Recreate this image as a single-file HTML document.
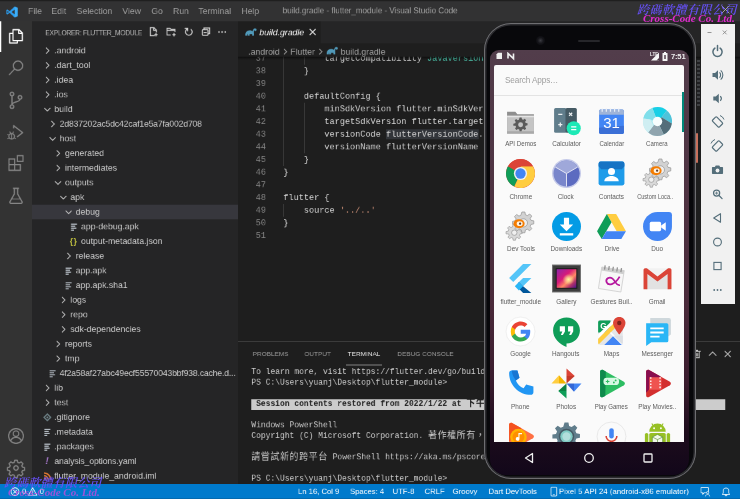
<!DOCTYPE html>
<html><head><meta charset="utf-8"><title>build.gradle - flutter_module - Visual Studio Code</title>
<style>
html,body{margin:0;padding:0;background:#1e1e1e;overflow:hidden}
body{width:740px;height:499px;position:relative;font-family:"Liberation Sans","Noto Sans CJK TC",sans-serif}
#vs{will-change:transform;position:absolute;left:0;top:0;width:1110px;height:749px;transform:scale(0.666667);transform-origin:0 0;background:#1e1e1e;color:#ccc;font-size:13px;overflow:hidden}
#vs div,#vs span{box-sizing:border-box}
.abs{position:absolute}
#title{left:0;top:0;width:1110px;height:31.500px;z-index:5;background:#323233;border-top:2px solid #1f1f1f}
#title .m{position:absolute;top:-.3px;height:29px;line-height:29px;color:#9d9d9d;font-size:13px;white-space:nowrap}
#act{left:0;top:30px;width:48px;height:696px;background:#333333}
#side{left:48px;top:30px;width:309px;height:696px;background:#252526}
#side .hd{position:absolute;left:20px;top:1.500px;height:35px;line-height:35px;font-size:10px;letter-spacing:-.34px;color:#bbbbbb;white-space:nowrap}
.row{position:absolute;left:48px;width:309px;height:22px;line-height:22px;white-space:nowrap;color:#cccccc;font-size:13px;overflow:hidden}
.row.sel{background:#37373d}
.row .tw{display:inline-block;width:16px;height:16px;vertical-align:-4px;margin-right:3px}
.row .ic{text-align:center;line-height:16px;vertical-align:0;height:16px}
.lbl{position:relative;top:-.4px}
#tabs{left:357px;top:30px;width:753px;height:35px;background:#252526}
#tab{left:357px;top:30px;width:124px;height:35px;background:#1e1e1e}
#bc{left:357px;top:65px;width:753px;height:19.500px;background:#1e1e1e;z-index:3}
#bcsh{left:357px;top:84.500px;width:753px;height:5px;z-index:3;background:linear-gradient(rgba(0,0,0,.55),rgba(0,0,0,0))}
#bc span{position:absolute;top:2px;line-height:22px;color:#a0a0a0;font-size:13px;white-space:nowrap}
#ed{left:357px;top:65px;width:753px;height:446px;overflow:hidden;font-family:"Liberation Mono",monospace;font-size:12.83px}
.ln{position:absolute;left:357px;width:42px;height:19px;line-height:19px;text-align:right;color:#858585;font-family:"Liberation Mono",monospace;font-size:12.83px}
.cl{position:absolute;left:425px;height:19px;line-height:19px;white-space:pre;color:#d4d4d4;font-family:"Liberation Mono",monospace;font-size:12.83px}
.cj{font-size:13.400px;letter-spacing:.95px}.ty{color:#4ec9b0}.st{color:#ce9178}.hl{background:#32353a}
.guide{position:absolute;width:1px;background:#404040}
#panel{left:357px;top:511.500px;width:753px;height:215px;background:#1e1e1e;border-top:1px solid #454545}
.pt{position:absolute;top:513.700px;height:35px;line-height:34px;font-size:9.700px;color:#999999;white-space:nowrap}
.tl{position:absolute;left:377px;height:16px;line-height:16px;white-space:pre;color:#cccccc;font-family:"Liberation Mono","Noto Sans CJK TC",monospace;font-size:11.95px}
#status{left:0;top:726px;width:1110px;height:23px;background:#007acc}
#status span{position:absolute;top:0;line-height:22px;color:#fff;font-size:11.500px;white-space:nowrap}

#phone{will-change:transform;position:absolute;left:0;top:0;width:740px;height:499px}
#pbody{position:absolute;left:484px;top:22.500px;width:211.500px;height:456.500px;border-radius:27px;background:#08080b;box-shadow:inset 0 0 0 1px #6e6e71,inset 0 0 0 2.500px #2c2c30}
#pscreen{position:absolute;left:490px;top:49.500px;width:198.800px;height:425px;border-radius:9px 9px 16px 16px;background:linear-gradient(#523d4b 0,#4f3443 30%,#4a2a3a 60%,#3a1c2e 78%,#1d0c1c 90%,#12071a 100%)}
#pcard{position:absolute;left:494px;top:64.700px;width:190.400px;height:377px;background:#fafafa;border-radius:2px 2px 0 0;overflow:hidden}
#psearch{position:absolute;left:11px;top:10.300px;font-size:8.200px;line-height:12px;color:#9e9e9e;letter-spacing:-.12px}
#pdiv{position:absolute;left:0;top:30px;width:191px;height:1px;background:#e3e3e3}
#pscroll{position:absolute;left:187.900px;top:27.500px;width:2.500px;height:39.500px;background:#00897b}
.ai{position:absolute}
.al{position:absolute;width:60px;text-align:center;font-size:7.800px;line-height:10px;color:#5c5c5c;white-space:nowrap}
.al span{display:inline-block;transform:scaleX(.82);transform-origin:50% 50%}
#tb{position:absolute;left:701px;top:23.500px;width:34px;height:280px;background:#f1f1f1}
.wm{will-change:transform;font-family:'Liberation Serif','Noto Serif CJK SC',serif;font-style:italic;font-weight:bold;white-space:nowrap}
</style></head><body>
<div id="vs">
<div id="title" class="abs">
<svg class="abs" style="left:9px;top:6.500px" width="18" height="18" viewBox="0 0 100 100"><path d="M72 4L30 43 12 29 3 33.500v33L12 71l18-14 42 39 25-11V15zM12 60V40l11 10zm60 9L47 50l25-19z" fill="#2c9ef0"/><path d="M72 4l25 11v70L72 96z" fill="#3daef8"/></svg>
<span class="m" style="left:42px">File</span><span class="m" style="left:77px">Edit</span><span class="m" style="left:115px">Selection</span><span class="m" style="left:183.500px">View</span><span class="m" style="left:227px">Go</span><span class="m" style="left:259.500px">Run</span><span class="m" style="left:297.500px">Terminal</span><span class="m" style="left:362px">Help</span>
<span class="m" style="left:424px;font-size:12.050px;color:#a2a2a2">build.gradle - flutter_module - Visual Studio Code</span>
</div>
<div id="act" class="abs"></div>
<div class="abs" style="left:0;top:30px;width:2px;height:48px;background:#fff"></div>
<svg class="abs" style="left:0;top:30px" width="48" height="696" viewBox="0 0 48 696">
<g fill="none" stroke="#ffffff" stroke-width="1.800" stroke-linejoin="round">
<path d="M19.500 14.500h9l5 5v11.500h-14z"/><path d="M28 14.500v5.500h5.500"/><path d="M19.500 20h-5v14.500h11.500v-3.500"/>
</g>
<g fill="none" stroke="#858585" stroke-width="1.800">
<circle cx="27" cy="68.500" r="7"/><path d="M22 73.500l-8.500 9"/>
<circle cx="18" cy="111" r="2.700"/><circle cx="18" cy="130" r="2.700"/><circle cx="30" cy="116" r="2.700"/><path d="M18 113.700v13.600M30 118.700c0 5-12 3.500-12 8.600"/>
<g transform="translate(0 3)"><path d="M20.500 159.500v-4l13.500 10.500-8.500 6.500" stroke-linejoin="round"/><circle cx="17.500" cy="171.500" r="4.200"/><path d="M17.500 167v9M11 168.500l2.500 1M11 175l2.500-1M24 175l-2.500-1M14.500 164.500l1.500 2M20.500 164.500l-1.500 2" stroke-width="1.300"/></g>
<g transform="translate(0 2)"><path d="M13.500 206.500h8.500v8.500h8.500v8.500h-17zM22 215v8.500M13.500 215h8.500"/><rect x="26" y="201.500" width="8.500" height="8.500"/></g>
<path d="M19.500 252.500h9M21.500 252.500v8.500l-6.500 11.500c-.6 1.200 0 2.500 1.500 2.500h15c1.500 0 2.100-1.300 1.500-2.500l-6.500-11.500v-8.500" stroke-linejoin="round"/><path d="M17.500 268.500h13" stroke-width="1.300"/>
<circle cx="24" cy="624" r="11"/><circle cx="24" cy="620.500" r="4.200"/><path d="M16 631.500c1.500-4.500 5-5.500 8-5.500s6.500 1 8 5.500"/>
</g>
<g transform="translate(24 672)" fill="none" stroke="#858585" stroke-width="1.800" stroke-linejoin="round">
<path d="M-2-11.500h4l.7 3.200 2.200.9 2.800-1.800 2.800 2.800-1.800 2.800.9 2.200 3.200.7v4l-3.200.7-.9 2.200 1.800 2.800-2.800 2.800-2.800-1.800-2.200.9-.7 3.200h-4l-.7-3.200-2.200-.9-2.800 1.800-2.800-2.800 1.800-2.800-.9-2.200-3.200-.7v-4l3.200-.7.9-2.200-1.800-2.800 2.800-2.800 2.800 1.800 2.200-.9z"/><circle cx="0" cy="0" r="3.300"/>
</g>
</svg>

<div id="side" class="abs"><span class="hd">EXPLORER: FLUTTER_MODULE</span></div>
<svg class="abs" style="left:220px;top:38px" width="125" height="20" viewBox="0 0 125 20">
<g fill="none" stroke="#d0d0d0" stroke-width="1.500">
<path d="M12 15.500H5.500v-12h5.500l3.500 3.500v3.500M10.500 3.500v4h4M14 11.500v5M11.500 14h5"/>
<path d="M36 14.500h-5.500v-10h4.500l1.500 1.500h6v4M30.500 7.500h12M41 11.500v5M38.500 14h5"/>
<path d="M66.500 6a5 5 0 1 1-5.300-.7M57.500 4.500h4v4" stroke-linecap="round"/>
<rect x="83.500" y="6.500" width="8.500" height="8.500" rx="1"/><path d="M86 6.500v-2.500h8.500v8.500h-2.500M85.500 10.700h4.500"/>
</g>
<g fill="#c5c5c5"><circle cx="108.500" cy="10" r="1.250"/><circle cx="113.200" cy="10" r="1.250"/><circle cx="117.900" cy="10" r="1.250"/></g>
</svg>

<div class="row" style="top:65px;padding-left:14.5px"><svg class="tw" viewBox="0 0 16 16"><path d="M6 3.5l4.5 4.5L6 12.5" fill="none" stroke="#c5c5c5" stroke-width="1.3"/></svg><span class="lbl">.android</span></div>
<div class="row" style="top:87px;padding-left:14.5px"><svg class="tw" viewBox="0 0 16 16"><path d="M6 3.5l4.5 4.5L6 12.5" fill="none" stroke="#c5c5c5" stroke-width="1.3"/></svg><span class="lbl">.dart_tool</span></div>
<div class="row" style="top:109px;padding-left:14.5px"><svg class="tw" viewBox="0 0 16 16"><path d="M6 3.5l4.5 4.5L6 12.5" fill="none" stroke="#c5c5c5" stroke-width="1.3"/></svg><span class="lbl">.idea</span></div>
<div class="row" style="top:131px;padding-left:14.5px"><svg class="tw" viewBox="0 0 16 16"><path d="M6 3.5l4.5 4.5L6 12.5" fill="none" stroke="#c5c5c5" stroke-width="1.3"/></svg><span class="lbl">.ios</span></div>
<div class="row" style="top:153px;padding-left:14.5px"><svg class="tw" viewBox="0 0 16 16"><path d="M3.5 6l4.5 4.5L12.500 6" fill="none" stroke="#c5c5c5" stroke-width="1.3"/></svg><span class="lbl">build</span></div>
<div class="row" style="top:175px;padding-left:22.5px"><svg class="tw" viewBox="0 0 16 16"><path d="M6 3.5l4.5 4.5L6 12.5" fill="none" stroke="#c5c5c5" stroke-width="1.3"/></svg><span class="lbl" style="letter-spacing:-.27px">2d837202ac5dc42caf1e5a7fa002d708</span></div>
<div class="row" style="top:197px;padding-left:22.5px"><svg class="tw" viewBox="0 0 16 16"><path d="M3.5 6l4.5 4.5L12.500 6" fill="none" stroke="#c5c5c5" stroke-width="1.3"/></svg><span class="lbl">host</span></div>
<div class="row" style="top:219px;padding-left:30.5px"><svg class="tw" viewBox="0 0 16 16"><path d="M6 3.5l4.5 4.5L6 12.5" fill="none" stroke="#c5c5c5" stroke-width="1.3"/></svg><span class="lbl">generated</span></div>
<div class="row" style="top:241px;padding-left:30.5px"><svg class="tw" viewBox="0 0 16 16"><path d="M6 3.5l4.5 4.5L6 12.5" fill="none" stroke="#c5c5c5" stroke-width="1.3"/></svg><span class="lbl">intermediates</span></div>
<div class="row" style="top:263px;padding-left:30.5px"><svg class="tw" viewBox="0 0 16 16"><path d="M3.5 6l4.5 4.5L12.500 6" fill="none" stroke="#c5c5c5" stroke-width="1.3"/></svg><span class="lbl">outputs</span></div>
<div class="row" style="top:285px;padding-left:38.5px"><svg class="tw" viewBox="0 0 16 16"><path d="M3.5 6l4.5 4.5L12.500 6" fill="none" stroke="#c5c5c5" stroke-width="1.3"/></svg><span class="lbl">apk</span></div>
<div class="row sel" style="top:307px;padding-left:46.5px"><svg class="tw" viewBox="0 0 16 16"><path d="M3.5 6l4.5 4.5L12.500 6" fill="none" stroke="#c5c5c5" stroke-width="1.3"/></svg><span class="lbl">debug</span></div>
<div class="row" style="top:329px;padding-left:54.5px"><svg class="tw" viewBox="0 0 16 16"><path d="M3.500 4.250h9M3.500 7.250h6.500M3.500 10.250h8M3.500 13.250h4.500" fill="none" stroke="#c3ccd4" stroke-width="1.500"/></svg><span class="lbl">app-debug.apk</span></div>
<div class="row" style="top:351px;padding-left:54.5px"><span class="tw ic" style="color:#cbcb41;font-weight:bold;font-size:12px;letter-spacing:1px">{}</span><span class="lbl">output-metadata.json</span></div>
<div class="row" style="top:373px;padding-left:46.5px"><svg class="tw" viewBox="0 0 16 16"><path d="M6 3.5l4.5 4.5L6 12.5" fill="none" stroke="#c5c5c5" stroke-width="1.3"/></svg><span class="lbl">release</span></div>
<div class="row" style="top:395px;padding-left:46.5px"><svg class="tw" viewBox="0 0 16 16"><path d="M3.500 4.250h9M3.500 7.250h6.500M3.500 10.250h8M3.500 13.250h4.500" fill="none" stroke="#c3ccd4" stroke-width="1.500"/></svg><span class="lbl">app.apk</span></div>
<div class="row" style="top:417px;padding-left:46.5px"><svg class="tw" viewBox="0 0 16 16"><path d="M3.500 4.250h9M3.500 7.250h6.500M3.500 10.250h8M3.500 13.250h4.500" fill="none" stroke="#c3ccd4" stroke-width="1.500"/></svg><span class="lbl">app.apk.sha1</span></div>
<div class="row" style="top:439px;padding-left:38.5px"><svg class="tw" viewBox="0 0 16 16"><path d="M6 3.5l4.5 4.5L6 12.5" fill="none" stroke="#c5c5c5" stroke-width="1.3"/></svg><span class="lbl">logs</span></div>
<div class="row" style="top:461px;padding-left:38.5px"><svg class="tw" viewBox="0 0 16 16"><path d="M6 3.5l4.5 4.5L6 12.5" fill="none" stroke="#c5c5c5" stroke-width="1.3"/></svg><span class="lbl">repo</span></div>
<div class="row" style="top:483px;padding-left:38.5px"><svg class="tw" viewBox="0 0 16 16"><path d="M6 3.5l4.5 4.5L6 12.5" fill="none" stroke="#c5c5c5" stroke-width="1.3"/></svg><span class="lbl">sdk-dependencies</span></div>
<div class="row" style="top:505px;padding-left:30.5px"><svg class="tw" viewBox="0 0 16 16"><path d="M6 3.5l4.5 4.5L6 12.5" fill="none" stroke="#c5c5c5" stroke-width="1.3"/></svg><span class="lbl">reports</span></div>
<div class="row" style="top:527px;padding-left:30.5px"><svg class="tw" viewBox="0 0 16 16"><path d="M6 3.5l4.5 4.5L6 12.5" fill="none" stroke="#c5c5c5" stroke-width="1.3"/></svg><span class="lbl">tmp</span></div>
<div class="row" style="top:549px;padding-left:22.5px"><svg class="tw" viewBox="0 0 16 16"><path d="M3.500 4.250h9M3.500 7.250h6.500M3.500 10.250h8M3.500 13.250h4.500" fill="none" stroke="#c3ccd4" stroke-width="1.500"/></svg><span class="lbl" style="letter-spacing:-.27px">4f2a58af27abc49ecf55570043bbf938.cache.d...</span></div>
<div class="row" style="top:571px;padding-left:14.5px"><svg class="tw" viewBox="0 0 16 16"><path d="M6 3.5l4.5 4.5L6 12.5" fill="none" stroke="#c5c5c5" stroke-width="1.3"/></svg><span class="lbl">lib</span></div>
<div class="row" style="top:593px;padding-left:14.5px"><svg class="tw" viewBox="0 0 16 16"><path d="M6 3.5l4.5 4.5L6 12.5" fill="none" stroke="#c5c5c5" stroke-width="1.3"/></svg><span class="lbl">test</span></div>
<div class="row" style="top:615px;padding-left:14.5px"><svg class="tw" viewBox="0 0 16 16"><path d="M8 3l5 5-5 5-5-5z" fill="none" stroke="#6d8086" stroke-width="1.800"/><circle cx="8" cy="8" r="1.500" fill="#6d8086"/></svg><span class="lbl">.gitignore</span></div>
<div class="row" style="top:637px;padding-left:14.5px"><svg class="tw" viewBox="0 0 16 16"><path d="M3.500 4.250h9M3.500 7.250h6.500M3.500 10.250h8M3.500 13.250h4.500" fill="none" stroke="#c3ccd4" stroke-width="1.500"/></svg><span class="lbl">.metadata</span></div>
<div class="row" style="top:659px;padding-left:14.5px"><svg class="tw" viewBox="0 0 16 16"><path d="M3.500 4.250h9M3.500 7.250h6.500M3.500 10.250h8M3.500 13.250h4.500" fill="none" stroke="#c3ccd4" stroke-width="1.500"/></svg><span class="lbl">.packages</span></div>
<div class="row" style="top:681px;padding-left:14.5px"><span class="tw ic" style="color:#a074c4;font-weight:bold;font-size:15px;font-style:italic">!</span><span class="lbl" style="letter-spacing:-.2px">analysis_options.yaml</span></div>
<div class="row" style="top:703px;padding-left:14.5px"><svg class="tw" viewBox="0 0 16 16"><circle cx="4.500" cy="12" r="1.800" fill="#e37933"/><path d="M3 7.500a6 6 0 0 1 6 6M3 3.500a10 10 0 0 1 10 10" fill="none" stroke="#e37933" stroke-width="2"/></svg><span class="lbl">flutter_module_android.iml</span></div>

<div id="tabs" class="abs"></div>
<div id="tab" class="abs"></div>
<span class="abs" style="left:389px;top:31px;line-height:35px;font-size:13px;font-style:italic;color:#fff;white-space:nowrap">build.gradle</span>
<svg class="abs" style="left:461px;top:40px" width="16" height="16" viewBox="0 0 16 16"><path d="M3.500 3.500l9 9M12.500 3.500l-9 9" stroke="#e8e8e8" stroke-width="1.600" fill="none"/></svg>
<div class="ln" style="top:77.6px">37</div><div class="cl" style="top:77.6px">        <span class="dim">targetCompatibility</span> <span class="ty">JavaVersion</span>.VERSION_1_8</div>
<div class="ln" style="top:96.6px">38</div><div class="cl" style="top:96.6px">    }</div>
<div class="ln" style="top:115.6px">39</div><div class="cl" style="top:115.6px"></div>
<div class="ln" style="top:134.6px">40</div><div class="cl" style="top:134.6px">    defaultConfig {</div>
<div class="ln" style="top:153.6px">41</div><div class="cl" style="top:153.6px">        minSdkVersion flutter.minSdkVersion</div>
<div class="ln" style="top:172.6px">42</div><div class="cl" style="top:172.6px">        targetSdkVersion flutter.targetSdkVersion</div>
<div class="ln" style="top:191.6px">43</div><div class="cl" style="top:191.6px">        versionCode <span class="hl">flutterVersionCode</span>.toInteger()</div>
<div class="ln" style="top:210.6px">44</div><div class="cl" style="top:210.6px">        versionName flutterVersionName</div>
<div class="ln" style="top:229.6px">45</div><div class="cl" style="top:229.6px">    }</div>
<div class="ln" style="top:248.6px">46</div><div class="cl" style="top:248.6px">}</div>
<div class="ln" style="top:267.6px">47</div><div class="cl" style="top:267.6px"></div>
<div class="ln" style="top:286.6px">48</div><div class="cl" style="top:286.6px">flutter {</div>
<div class="ln" style="top:305.6px">49</div><div class="cl" style="top:305.6px">    source <span class="st">'../..'</span></div>
<div class="ln" style="top:324.6px">50</div><div class="cl" style="top:324.6px">}</div>
<div class="ln" style="top:343.6px">51</div><div class="cl" style="top:343.6px"></div>

<div class="guide" style="left:425px;top:78px;height:171px"></div>
<div class="guide" style="left:456px;top:78px;height:19px"></div>
<div class="guide" style="left:456px;top:154px;height:76px"></div>
<div class="guide" style="left:425px;top:306px;height:19px"></div>
<div id="bcsh" class="abs"></div><div id="bc" class="abs"><span style="left:15.500px">.android</span><span style="left:78.500px">Flutter</span><span style="left:154px">build.gradle</span>
<svg class="abs" style="left:0;top:0" width="200" height="22" viewBox="0 0 200 22"><path d="M69 8.500l4 4-4 4M122 8.500l4 4-4 4" fill="none" stroke="#a0a0a0" stroke-width="1.200"/></svg></div>
<svg class="abs" style="left:366px;top:39px;z-index:4" width="20" height="18" viewBox="0 0 20 18"><path d="M2 13.500c0-4 2.500-7 6.500-7 2 0 3.500.5 4.500 1.500.3-2.300 1.500-4 3-4.500 1.500-.4 2.800.6 2.800 2 0 1.300-1 2.200-2.100 2-.6-.1-1-.6-.9-1.300-.8.600-1.100 2-1 3.600.1 1.500.2 3.200.2 4.700h-2.800v-2.500c-1 .4-2.500.4-3.700 0v2.500H5.700v-3c-.5.500-.7 1.200-.7 2.200v.8H2z" fill="#519aba"/></svg>
<svg class="abs" style="left:488px;top:67px;z-index:4" width="20" height="18" viewBox="0 0 20 18"><path d="M2 13.500c0-4 2.500-7 6.500-7 2 0 3.500.5 4.500 1.500.3-2.300 1.500-4 3-4.500 1.500-.4 2.800.6 2.800 2 0 1.300-1 2.200-2.100 2-.6-.1-1-.6-.9-1.300-.8.600-1.100 2-1 3.600.1 1.500.2 3.200.2 4.700h-2.800v-2.500c-1 .4-2.500.4-3.700 0v2.500H5.700v-3c-.5.500-.7 1.200-.7 2.200v.8H2z" fill="#519aba"/></svg>

<div id="panel" class="abs"></div>
<span class="pt" style="left:379px">PROBLEMS</span><span class="pt" style="left:456.500px">OUTPUT</span><span class="pt" style="left:519px;padding:0 2.500px;color:#e7e7e7;border-bottom:1px solid #e7e7e7;height:34.300px">TERMINAL</span><span class="pt" style="left:596px">DEBUG CONSOLE</span>
<svg class="abs" style="left:1036px;top:521px" width="70" height="20" viewBox="0 0 70 20"><g fill="none" stroke="#c5c5c5" stroke-width="1.300"><path d="M4 6h11M6 6v9.500h7V6M8 4.500h3M8.300 8.500v5M10.700 8.500v5"/><path d="M27.500 12.500l5.500-5.500 5.500 5.500"/><path d="M51 5.500l9 9M60 5.500l-9 9"/></g></svg>
<div class="tl" style="top:550px">To learn more, visit https://flutter.dev/go/build-aar</div>
<div class="tl" style="top:566px">PS C:\Users\yuanj\Desktop\flutter_module&gt;</div>
<div class="abs" style="left:377px;top:599px;width:711px;height:16px;background:#cccccc"></div>
<div class="tl" style="top:598px;color:#1e1e1e;font-weight:bold"> Session contents restored from 2022/1/22 at <span class="cj">下午</span> 03:41:15 </div>
<div class="tl" style="top:630px">Windows PowerShell</div>
<div class="tl" style="top:646px">Copyright (C) Microsoft Corporation. <span class="cj">著作權所有，並保留一切權利。</span></div>
<div class="tl" style="top:678px"><span class="cj">請嘗試新的跨平台</span> PowerShell https://aka.ms/pscore6</div>
<div class="tl" style="top:710px">PS C:\Users\yuanj\Desktop\flutter_module&gt;</div>

<div id="status" class="abs">
<span style="left:33px">0</span><span style="left:59.500px">0</span>
<span style="left:447px">Ln 16, Col 9</span><span style="left:525px">Spaces: 4</span><span style="left:589px">UTF-8</span><span style="left:637px">CRLF</span><span style="left:679px">Groovy</span><span style="left:733px">Dart DevTools</span><span style="left:838.500px;letter-spacing:.1px">Pixel 5 API 24 (android-x86 emulator)</span>
</div>
<svg class="abs" style="left:0;top:726px" width="1110" height="22" viewBox="0 0 1110 22">
<g fill="none" stroke="#ffffff" stroke-width="1.200">
<circle cx="22.500" cy="11.500" r="5.800"/><path d="M19.800 8.800l5.400 5.400M25.200 8.800l-5.400 5.400"/>
<path d="M49 5.500l6.300 11.500H42.700z" stroke-linejoin="round"/><path d="M49 9.500v4M49 14.500v1.300"/>
<rect x="826.500" y="5" width="8.500" height="13" rx="1.200"/><path d="M829.500 15.800h2.500" stroke-width="1"/>
<path d="M1051.500 5.500h11v7.500h-6l-2.500 2.500v-2.500h-2.500z" stroke-linejoin="round" stroke-width="1.100"/><circle cx="1061.500" cy="13" r="1.700" fill="#007acc" stroke-width="1"/><path d="M1058.300 18.500c.3-2 1.600-3 3.200-3s2.900 1 3.200 3" stroke-width="1"/>
<path d="M1083.500 15.500h11l-1.500-2v-3.500a4 4 0 0 0-8 0v3.500zM1087.700 16v.5a1.300 1.300 0 0 0 2.600 0V16" stroke-linejoin="round" stroke-width="1.100"/>
</g>
</svg>

<div class="abs" style="left:0;top:747.500px;width:1110px;height:2px;background:#123a58"></div>
</div>
<div id="phone">
<div id="pbody"></div><div id="pscreen"></div><div id="pcard"><div id="psearch">Search Apps…</div><div id="pdiv"></div><div id="pscroll"></div>
<svg class="ai" style="left:11.2px;top:41.2px" width="31.0" height="31.0" viewBox="0 0 30 30"><path d="M2 5.500h8l2 2.500h16v18.500H2z" fill="#8f8f8f"/><path d="M2 9.500h26v17H2z" fill="#c4c4c4"/><path d="M2 9.500h26v1.500H2z" fill="#e4e4e4"/><path d="M2 24.500h26v2H2z" fill="#a9a9a9"/><g transform="translate(7 10) scale(.54)" fill="#5a5a5a"><path d="M13.200 2h3.600l.6 3.300 2.300 1 2.800-1.900 2.500 2.500-1.900 2.800 1 2.300 3.300.6v3.600l-3.300.6-1 2.300 1.900 2.800-2.500 2.500-2.800-1.900-2.300 1-.6 3.300h-3.600l-.6-3.300-2.300-1-2.800 1.900-2.500-2.500 1.900-2.800-1-2.300L2 16.800v-3.600l3.300-.6 1-2.300-1.900-2.800 2.500-2.500 2.800 1.900 2.300-1z"/></g><circle cx="15.100" cy="18.100" r="2.400" fill="#c4c4c4"/></svg>
<div class="al" style="left:-3.3px;top:74.5px"><span style="transform:scaleX(0.79)">API Demos</span></div>
<svg class="ai" style="left:56.7px;top:41.2px" width="31.0" height="31.0" viewBox="0 0 30 30"><rect x="3" y="2" width="12" height="24" rx="1.500" fill="#607d8b"/><rect x="14" y="2" width="11" height="24" rx="1.500" fill="#455a64"/><path d="M7 8h4M7 18h4M9 16v4M17.500 6.500l3 3M20.500 6.500l-3 3" stroke="#eceff1" stroke-width="1.200" fill="none"/><circle cx="22" cy="21.500" r="6.800" fill="#1de9b6"/><path d="M19.500 20.300h5M19.500 22.800h5" stroke="#fff" stroke-width="1.200"/></svg>
<div class="al" style="left:42.2px;top:74.5px"><span>Calculator</span></div>
<svg class="ai" style="left:102.2px;top:41.2px" width="31.0" height="31.0" viewBox="0 0 30 30"><rect x="3" y="3.500" width="24" height="23.500" rx="1.500" fill="#4285f4"/><path d="M3 5A1.500 1.500 0 0 1 4.500 3.500h21A1.500 1.500 0 0 1 27 5v3.500H3z" fill="#9fb4d8"/><path d="M6 2.500v3M10 2.500v3M14 2.500v3M18 2.500v3M22 2.500v3" stroke="#e8eef8" stroke-width="1.200"/><path d="M3 21l24-2v6.500a1.500 1.500 0 0 1-1.500 1.500h-21A1.500 1.500 0 0 1 3 25.500z" fill="#3b6fd6"/><text x="15" y="21.500" text-anchor="middle" font-family="Liberation Sans,sans-serif" font-size="14.500" fill="#fff">31</text></svg>
<div class="al" style="left:87.7px;top:74.5px"><span style="transform:scaleX(0.78)">Calendar</span></div>
<svg class="ai" style="left:147.7px;top:41.2px" width="31.0" height="31.0" viewBox="0 0 30 30"><circle cx="15" cy="15" r="14" fill="#b2ebf2"/><path d="M15 15L10 2A14 14 0 0 1 24 4.300L19 11z" fill="#18cfe6"/><path d="M10 2L15 15l-7-2L1.300 12A14 14 0 0 1 10 2z" fill="#80deea"/><path d="M24 4.300A14 14 0 0 1 28.900 17L19 11z" fill="#4fc3d9"/><path d="M28.900 17A14 14 0 0 1 21 27.600L15 15l4-4z" fill="#546e7a"/><path d="M21 27.600A14 14 0 0 1 6 25.700L11 19l4-4z" fill="#90a4ae"/><path d="M6 25.700A14 14 0 0 1 1.300 12L8 13l3 6z" fill="#cfeef2"/><circle cx="15" cy="15" r="4.600" fill="#f7fdfe"/></svg>
<div class="al" style="left:133.2px;top:74.5px"><span style="transform:scaleX(0.775)">Camera</span></div>
<svg class="ai" style="left:11.2px;top:93.7px" width="31.0" height="31.0" viewBox="0 0 30 30"><circle cx="15" cy="15" r="14" fill="#db4437"/><path d="M15 15L2.900 8A14 14 0 0 0 9 27.700L15 15z" fill="#0f9d58"/><path d="M15 15L9 27.700A14 14 0 0 0 27.100 8H15z" fill="#ffcd40"/><path d="M15 15L2.900 8A14 14 0 0 1 27.100 8H15z" fill="#db4437"/><circle cx="15" cy="15" r="6.400" fill="#f1f1f1"/><circle cx="15" cy="15" r="5" fill="#4285f4"/></svg>
<div class="al" style="left:-3.3px;top:127.0px"><span>Chrome</span></div>
<svg class="ai" style="left:56.7px;top:93.7px" width="31.0" height="31.0" viewBox="0 0 30 30"><circle cx="15" cy="15" r="14" fill="#c5cae9"/><circle cx="15" cy="15" r="12.600" fill="#7986cb"/><path d="M15 15L4.100 8.700A12.600 12.600 0 0 1 25.900 8.700z" fill="#9fa8da"/><path d="M15 15l10.900-6.300A12.600 12.600 0 0 1 15 27.600z" fill="#5c6bc0"/><path d="M15 15L4.100 8.700M15 15l10.900-6.300M15 15v12.600" stroke="#e8eaf6" stroke-width=".9" fill="none"/></svg>
<div class="al" style="left:42.2px;top:127.0px"><span>Clock</span></div>
<svg class="ai" style="left:102.2px;top:93.7px" width="31.0" height="31.0" viewBox="0 0 30 30"><rect x="2.500" y="3.500" width="25" height="23" rx="2" fill="#1e9be9"/><path d="M2.500 5.500a2 2 0 0 1 2-2h21a2 2 0 0 1 2 2V8l-2.500 3h-20L2.500 8z" fill="#1573c4"/><circle cx="15" cy="13" r="3.400" fill="#fff"/><path d="M8 22.500c0-3.500 4.500-5 7-5s7 1.500 7 5z" fill="#fff"/></svg>
<div class="al" style="left:87.7px;top:127.0px"><span>Contacts</span></div>
<svg class="ai" style="left:147.7px;top:93.7px" width="31.0" height="31.0" viewBox="0 0 30 30"><g transform="translate(-.2 11.800) scale(.615)" fill="#d9d9d9" stroke="#9c9c9c" stroke-width="1.100"><path d="M13.200 2h3.600l.6 3.300 2.300 1 2.800-1.900 2.500 2.500-1.900 2.800 1 2.300 3.300.6v3.600l-3.300.6-1 2.300 1.900 2.800-2.500 2.500-2.800-1.900-2.300 1-.6 3.300h-3.600l-.6-3.300-2.300-1-2.800 1.900-2.500-2.500 1.900-2.800-1-2.300L2 16.800v-3.600l3.300-.6 1-2.300-1.900-2.800 2.500-2.500 2.800 1.900 2.300-1z"/></g><circle cx="9" cy="21" r="2.600" fill="#f0f0f0" stroke="#8a8a8a" stroke-width=".6"/><g transform="translate(5.650 -.65) scale(.81)" fill="#d2d2d2" stroke="#999999" stroke-width=".9"><path d="M13.200 2h3.600l.6 3.300 2.300 1 2.800-1.900 2.500 2.500-1.900 2.800 1 2.300 3.300.6v3.600l-3.300.6-1 2.300 1.900 2.800-2.500 2.500-2.800-1.900-2.300 1-.6 3.300h-3.600l-.6-3.300-2.300-1-2.800 1.900-2.500-2.500 1.900-2.800-1-2.300L2 16.800v-3.600l3.300-.6 1-2.300-1.900-2.800 2.500-2.500 2.800 1.900 2.300-1z"/></g><circle cx="17.800" cy="11.500" r="4" fill="#efefef" stroke="#8a8a8a" stroke-width=".6"/><ellipse cx="13.600" cy="12.300" rx="5.400" ry="4.300" fill="#f57c00"/><ellipse cx="14.200" cy="12.300" rx="2.900" ry="2.300" fill="#fff3e0"/><circle cx="14.600" cy="12.300" r="1.100" fill="#5d4037"/></svg>
<div class="al" style="left:130.8px;top:127.0px"><span style="transform:scaleX(0.715)">Custom Loca..</span></div>
<svg class="ai" style="left:11.2px;top:146.2px" width="31.0" height="31.0" viewBox="0 0 30 30"><g transform="translate(-.2 11.800) scale(.615)" fill="#d9d9d9" stroke="#9c9c9c" stroke-width="1.100"><path d="M13.200 2h3.600l.6 3.300 2.300 1 2.800-1.900 2.500 2.500-1.900 2.800 1 2.300 3.300.6v3.600l-3.300.6-1 2.300 1.900 2.800-2.500 2.500-2.800-1.900-2.300 1-.6 3.300h-3.600l-.6-3.300-2.300-1-2.800 1.900-2.500-2.500 1.900-2.800-1-2.300L2 16.800v-3.600l3.300-.6 1-2.300-1.900-2.800 2.500-2.500 2.800 1.900 2.300-1z"/></g><circle cx="9" cy="21" r="2.600" fill="#f0f0f0" stroke="#8a8a8a" stroke-width=".6"/><g transform="translate(5.650 -.65) scale(.81)" fill="#d2d2d2" stroke="#999999" stroke-width=".9"><path d="M13.200 2h3.600l.6 3.300 2.300 1 2.800-1.900 2.500 2.500-1.900 2.800 1 2.300 3.300.6v3.600l-3.300.6-1 2.300 1.900 2.800-2.500 2.500-2.800-1.900-2.300 1-.6 3.300h-3.600l-.6-3.300-2.300-1-2.800 1.900-2.500-2.500 1.900-2.800-1-2.300L2 16.800v-3.600l3.300-.6 1-2.300-1.900-2.800 2.500-2.500 2.800 1.900 2.300-1z"/></g><circle cx="17.800" cy="11.500" r="4" fill="#efefef" stroke="#8a8a8a" stroke-width=".6"/><ellipse cx="13.600" cy="12.300" rx="5.400" ry="4.300" fill="#f57c00"/><ellipse cx="14.200" cy="12.300" rx="2.900" ry="2.300" fill="#fff3e0"/><circle cx="14.600" cy="12.300" r="1.100" fill="#5d4037"/></svg>
<div class="al" style="left:-3.3px;top:179.5px"><span>Dev Tools</span></div>
<svg class="ai" style="left:56.7px;top:146.2px" width="31.0" height="31.0" viewBox="0 0 30 30"><circle cx="15" cy="15" r="14" fill="#039be5"/><path d="M12.500 6.500h5v6.500h4L15 19.500 8.500 13h4z" fill="#fff"/><rect x="8.500" y="21.500" width="13" height="2.200" fill="#fff"/></svg>
<div class="al" style="left:42.2px;top:179.5px"><span>Downloads</span></div>
<svg class="ai" style="left:102.2px;top:146.2px" width="31.0" height="31.0" viewBox="0 0 30 30"><path d="M10.500 3h9l9.500 16.500h-9z" fill="#ffcd40"/><path d="M10.500 3L1 19.500 5.500 27 15 10.800z" fill="#0f9d58"/><path d="M10 19.500h19L24.500 27h-19z" fill="#4285f4"/></svg>
<div class="al" style="left:87.7px;top:179.5px"><span>Drive</span></div>
<svg class="ai" style="left:147.7px;top:146.2px" width="31.0" height="31.0" viewBox="0 0 30 30"><path d="M15 1h11a3 3 0 0 1 3 3v11A14 14 0 1 1 15 1z" fill="#4285f4"/><rect x="7.500" y="10.500" width="11" height="9" rx="1.500" fill="#fff"/><path d="M18.500 14l4.500-3.200v8.400L18.500 16z" fill="#fff"/></svg>
<div class="al" style="left:133.2px;top:179.5px"><span>Duo</span></div>
<svg class="ai" style="left:11.2px;top:198.7px" width="31.0" height="31.0" viewBox="0 0 30 30"><path d="M17.500 1h8L8 18.500l-4-4z" fill="#54c5f8"/><path d="M17.500 14.500h8L17.500 22.500l-4-4z" fill="#54c5f8"/><path d="M13.500 18.500l4 4 0 0 8 6.500h-8l-4-4-2.500-2.500z" fill="#01579b"/><path d="M13.500 18.500l4 4-4 4-4-4z" fill="#29b6f6"/></svg>
<div class="al" style="left:-3.3px;top:232.0px"><span>flutter_module</span></div>
<svg class="ai" style="left:56.7px;top:198.7px" width="31.0" height="31.0" viewBox="0 0 30 30"><defs><linearGradient id="gal" x1="0" y1="0" x2="1" y2="1"><stop offset="0" stop-color="#8e24aa"/><stop offset=".4" stop-color="#d81b78"/><stop offset=".62" stop-color="#ff8a65"/><stop offset=".8" stop-color="#b0306a"/><stop offset="1" stop-color="#4a148c"/></linearGradient><radialGradient id="gal2" cx=".6" cy=".55" r=".3"><stop offset="0" stop-color="#fff59d"/><stop offset="1" stop-color="#fff59d" stop-opacity="0"/></radialGradient></defs><rect x="1" y="1.500" width="28" height="27" fill="#6e6e6e"/><rect x="2" y="2.500" width="26" height="25" fill="#3c3c3c"/><rect x="4.500" y="5" width="21" height="20" fill="#1c1c1c"/><rect x="5.500" y="6" width="19" height="18" fill="url(#gal)"/><rect x="5.500" y="6" width="19" height="18" fill="url(#gal2)"/></svg>
<div class="al" style="left:42.2px;top:232.0px"><span>Gallery</span></div>
<svg class="ai" style="left:102.2px;top:198.7px" width="31.0" height="31.0" viewBox="0 0 30 30"><g transform="rotate(9 15 15)"><rect x="4" y="5.500" width="22" height="21" fill="#f7f7f7" stroke="#d0d0d0" stroke-width=".8"/><path d="M4 5.500h22v3.500H4z" fill="#cfcfcf"/><path d="M7 3.500v4M11 3.500v4M15 3.500v4M19 3.500v4M23 3.500v4" stroke="#8e8e8e" stroke-width="1.200"/><path d="M22.500 12c-3.500 9-9.500 10.500-11.500 7.500s1.500-6.500 5-4.500 4.500 6.500 8 5" fill="none" stroke="#b5179e" stroke-width="1.700"/></g></svg>
<div class="al" style="left:87.7px;top:232.0px"><span>Gestures Buil..</span></div>
<svg class="ai" style="left:147.7px;top:198.7px" width="31.0" height="31.0" viewBox="0 0 30 30"><rect x="1.500" y="5" width="27" height="20.500" rx="1.500" fill="#f2f2f2"/><path d="M4 25.500V8l11 8.500L26 8v17.500" fill="#e2e2e2"/><path d="M1.500 6.500A1.500 1.500 0 0 1 3 5h1.700L15 13 25.300 5H27a1.500 1.500 0 0 1 1.500 1.500v19h-3.700V10.600L15 18 5.200 10.600v14.900H1.500z" fill="#db4437"/></svg>
<div class="al" style="left:133.2px;top:232.0px"><span>Gmail</span></div>
<svg class="ai" style="left:11.2px;top:251.2px" width="31.0" height="31.0" viewBox="0 0 30 30"><circle cx="15" cy="15" r="14" fill="#fff" stroke="#e6e6e6" stroke-width=".6"/><g transform="translate(-2.250 -2.250) scale(1.150)"><path d="M23.200 15.200c0-.6-.05-1.100-.15-1.600H15.200v3.200h4.500c-.2 1-.8 1.900-1.700 2.500v2.100h2.700c1.600-1.500 2.500-3.600 2.500-6.200z" fill="#4285f4"/><path d="M15.200 23.500c2.300 0 4.200-.8 5.500-2.100l-2.700-2.100c-.7.500-1.700.8-2.800.8-2.200 0-4-1.500-4.700-3.400H7.700v2.200c1.400 2.700 4.200 4.600 7.500 4.600z" fill="#34a853"/><path d="M10.500 16.700c-.2-.5-.3-1.100-.3-1.700s.1-1.200.3-1.700v-2.200H7.700c-.6 1.200-.9 2.500-.9 3.900s.3 2.700.9 3.900z" fill="#fbbc05"/><path d="M15.200 9.900c1.200 0 2.400.4 3.200 1.300l2.400-2.400c-1.500-1.400-3.400-2.200-5.600-2.200-3.300 0-6.100 1.900-7.500 4.600l2.800 2.200c.7-2 2.500-3.500 4.700-3.500z" fill="#ea4335"/></g></svg>
<div class="al" style="left:-3.3px;top:284.5px"><span>Google</span></div>
<svg class="ai" style="left:56.7px;top:251.2px" width="31.0" height="31.0" viewBox="0 0 30 30"><path d="M15 1.500c7.200 0 13 5.600 13 12.500S22.200 26.500 15 26.500v3.500C8 27 2 21.500 2 14S7.800 1.500 15 1.500z" fill="#0f9d58"/><path d="M8.500 10h5v5l-2 3.500H9.500l1.500-3.500H8.500zM16.500 10h5v5l-2 3.500h-2l1.500-3.500h-2.500z" fill="#fff"/></svg>
<div class="al" style="left:42.2px;top:284.5px"><span>Hangouts</span></div>
<svg class="ai" style="left:102.2px;top:251.2px" width="31.0" height="31.0" viewBox="0 0 30 30"><defs><clipPath id="mapc"><rect x="2" y="4" width="24" height="24" rx="2"/></clipPath></defs><g clip-path="url(#mapc)"><rect x="2" y="4" width="24" height="24" fill="#e4e6e9"/><path d="M2 4h12v12H2z" fill="#0f9d58"/><path d="M2 28V22L20 4h6L2 28z" fill="#ffcd40"/><path d="M2 22L20 4h-4L2 18z" fill="#fff"/><path d="M8 28l9-9 9 9z" fill="#4285f4"/><path d="M14 16l12 12" stroke="#fff" stroke-width="1.600"/><path d="M17 19l9 9v-9z" fill="#dcdfe3"/></g><text x="4.200" y="13" font-family="Liberation Sans,sans-serif" font-size="8" font-weight="bold" fill="#fff">G</text><path d="M22.500 1c3.500 0 6 2.600 6 5.800 0 4.200-6 11.200-6 11.200s-6-7-6-11.200c0-3.200 2.500-5.800 6-5.800z" fill="#db4437"/><circle cx="22.500" cy="6.800" r="2.100" fill="#7b231b"/></svg>
<div class="al" style="left:87.7px;top:284.5px"><span>Maps</span></div>
<svg class="ai" style="left:147.7px;top:251.2px" width="31.0" height="31.0" viewBox="0 0 30 30"><path d="M8 2h18a2 2 0 0 1 2 2v14l-6 4H8z" fill="#cfd8dc"/><path d="M4 7h20a1.500 1.500 0 0 1 1.500 1.500V24a1.500 1.500 0 0 1-1.500 1.500H9L4 29z" fill="#29b6f6"/><path d="M8 12h13M8 16h13M8 20h9" stroke="#fff" stroke-width="1.800"/></svg>
<div class="al" style="left:133.2px;top:284.5px"><span>Messenger</span></div>
<svg class="ai" style="left:11.2px;top:303.7px" width="31.0" height="31.0" viewBox="0 0 30 30"><path d="M6.500 2.500h5.500l2 7-3.500 2.500c1.500 3.500 4 6 7.500 7.500l2.500-3.500 7 2v5.500c0 1.500-1 2.500-2.500 2.500C13.500 26 4 16.500 4 5c0-1.500 1-2.500 2.500-2.500z" fill="#2196f3"/><path d="M6.500 2.500h5.500l2 7-3.500 2.500C9 10 7 7 6.500 2.500z" fill="#1976d2"/></svg>
<div class="al" style="left:-3.3px;top:337.0px"><span>Phone</span></div>
<svg class="ai" style="left:56.7px;top:303.7px" width="31.0" height="31.0" viewBox="0 0 30 30"><path d="M15 15V.5l8 7.250H15z" fill="#db4437"/><path d="M15 15H.5l7.250-8V15z" fill="#ffcd40"/><path d="M15 15v14.500l-8-7.250H15z" fill="#0f9d58"/><path d="M15 15h14.500l-7.250 8V15z" fill="#4285f4"/><path d="M15 7.750h8L15 15z" fill="#c53929"/><path d="M7.750 15V7L15 15z" fill="#f4b400"/><path d="M15 22.250H7L15 15z" fill="#0b8043"/><path d="M22.250 15v8L15 15z" fill="#3367d6"/></svg>
<div class="al" style="left:42.2px;top:337.0px"><span>Photos</span></div>
<svg class="ai" style="left:102.2px;top:303.7px" width="31.0" height="31.0" viewBox="0 0 30 30"><path d="M4 3.500c0-1.500 1.500-2.300 2.800-1.600L27 13.300c1.300.8 1.300 2.600 0 3.400L6.800 28.100C5.500 28.800 4 28 4 26.500z" fill="#2dbd62"/><path d="M4 3.500c0-1.500 1.500-2.300 2.800-1.600L9.500 3.400 9 27l-2.200 1.100C5.500 28.800 4 28 4 26.500z" fill="#0f8a4c"/><path d="M10.500 9.500h8.500a3.300 3.300 0 0 1 3.300 3.300v.4a3.300 3.300 0 0 1-3.300 3.300h-8.500a3.300 3.300 0 0 1-3.300-3.300v-.4a3.300 3.300 0 0 1 3.300-3.300z" fill="#d7f9e3"/><circle cx="19" cy="12" r=".9" fill="#2dbd62"/><circle cx="17.300" cy="14" r=".9" fill="#2dbd62"/><path d="M9.500 13h3.500M11.250 11.300v3.400" stroke="#2dbd62" stroke-width="1"/></svg>
<div class="al" style="left:87.7px;top:337.0px"><span style="transform:scaleX(0.78)">Play Games</span></div>
<svg class="ai" style="left:147.7px;top:303.7px" width="31.0" height="31.0" viewBox="0 0 30 30"><path d="M4 3.500c0-1.500 1.500-2.300 2.800-1.600L27 13.300c1.300.8 1.300 2.600 0 3.400L6.800 28.100C5.500 28.800 4 28 4 26.500z" fill="#d32f2f"/><path d="M4 3.500c0-1.500 1.500-2.300 2.800-1.600L18 8.200 4 24z" fill="#880e4f"/><path d="M7 9h12v12H7z" fill="#ef5350"/><path d="M8.500 9v12M17.500 9v12" stroke="#fff" stroke-width="1.300" stroke-dasharray="1.500 1.500"/></svg>
<div class="al" style="left:133.2px;top:337.0px"><span>Play Movies..</span></div>
<svg class="ai" style="left:11.2px;top:356.2px" width="31.0" height="31.0" viewBox="0 0 30 30"><path d="M4 3.500c0-1.500 1.500-2.300 2.800-1.600L27 13.300c1.300.8 1.300 2.600 0 3.400L6.800 28.100C5.500 28.800 4 28 4 26.500z" fill="#ff7043"/><path d="M4 3.500c0-1.500 1.500-2.300 2.800-1.600L16 7 4 20z" fill="#f4511e"/><circle cx="13" cy="15.500" r="8" fill="#ffb300"/><circle cx="13" cy="15.500" r="5.800" fill="#ff8f00"/><path d="M14 11.500v5.800a1.800 1.800 0 1 1-1-1.600v-4.200h3.500v1.300H14z" fill="#fff"/></svg>
<svg class="ai" style="left:56.7px;top:356.2px" width="31.0" height="31.0" viewBox="0 0 30 30"><g transform="translate(-.75 -.75) scale(1.050)" fill="#607d8b"><path d="M13.200 2h3.600l.6 3.300 2.300 1 2.800-1.900 2.500 2.500-1.900 2.800 1 2.300 3.300.6v3.600l-3.300.6-1 2.300 1.900 2.800-2.500 2.500-2.800-1.900-2.300 1-.6 3.300h-3.600l-.6-3.300-2.300-1-2.800 1.900-2.500-2.500 1.900-2.800-1-2.300L2 16.800v-3.600l3.300-.6 1-2.300-1.900-2.800 2.500-2.500 2.800 1.900 2.300-1z"/></g><circle cx="15" cy="15" r="7.500" fill="#455a64"/><circle cx="15" cy="15" r="6" fill="#80cbc4"/><circle cx="15" cy="15" r="4" fill="#b2dfdb"/></svg>
<svg class="ai" style="left:102.2px;top:356.2px" width="31.0" height="31.0" viewBox="0 0 30 30"><circle cx="15" cy="15" r="14" fill="#fafafa" stroke="#e2e2e2" stroke-width=".7"/><rect x="12.800" y="7" width="4.400" height="10" rx="2.200" fill="#4285f4"/><path d="M9.800 14.500a5.200 5.200 0 0 0 10.400 0" fill="none" stroke="#db4437" stroke-width="1.500"/><path d="M15 19.500v4" stroke="#db4437" stroke-width="1.600"/></svg>
<svg class="ai" style="left:147.7px;top:356.2px" width="31.0" height="31.0" viewBox="0 0 30 30"><path d="M7 10.500a8 8 0 0 1 16 0z" fill="#97c024"/><rect x="7" y="11.500" width="16" height="14" rx="1.500" fill="#97c024"/><rect x="2.800" y="11.500" width="3.300" height="10" rx="1.600" fill="#97c024"/><rect x="23.900" y="11.500" width="3.300" height="10" rx="1.600" fill="#97c024"/><path d="M9.500 2.500l2 3M20.500 2.500l-2 3" stroke="#97c024" stroke-width="1"/><circle cx="11.700" cy="7" r=".9" fill="#fff"/><circle cx="18.300" cy="7" r=".9" fill="#fff"/><path d="M15 13l5 2.500v6L15 24l-5-2.500v-6z" fill="#f1f8e9" stroke="#558b2f" stroke-width=".6"/><path d="M10 15.500l5 2.500 5-2.500M15 18v6" fill="none" stroke="#558b2f" stroke-width=".6"/></svg>
</div>
<svg class="abs" style="left:496px;top:52px" width="20" height="10" viewBox="0 0 20 10"><path d="M.5 2.200L2 .7H6v6.300H.5z" fill="#f0f0f0"/><path d="M12 6.500V1.400l5.500 5.200V1.400" fill="none" stroke="#f0f0f0" stroke-width="1.600"/></svg>
<svg class="abs" style="left:649.500px;top:51px" width="20" height="11" viewBox="0 0 20 11"><path d="M9 9.500V1.500L1 9.500z" fill="#f5f5f5"/><path d="M6.500 9.500L9 7v2.500z" fill="#4a3743"/><text x="0" y="4.500" font-family="Liberation Sans,sans-serif" font-size="4.500" font-weight="bold" fill="#f5f5f5">LTE</text><rect x="12.500" y="2" width="5" height="8" rx=".6" fill="#f5f5f5"/><rect x="14" y="1" width="2" height="1.500" fill="#f5f5f5"/><rect x="14.300" y="4" width="1.400" height="4" fill="#4a3743"/></svg>
<span class="abs" style="left:671px;top:51px;font-size:7.600px;line-height:12px;color:#eeeeee;font-weight:bold;letter-spacing:-.2px">7:51</span>
<svg class="abs" style="left:520px;top:449px" width="140" height="18" viewBox="0 0 140 18"><path d="M12.500 4.500v9l-7-4.500z" fill="none" stroke="#f0f0f0" stroke-width="1.300" stroke-linejoin="round"/><circle cx="69" cy="9" r="4.300" fill="none" stroke="#f0f0f0" stroke-width="1.300"/><rect x="124" y="5" width="8" height="8" rx=".8" fill="none" stroke="#f0f0f0" stroke-width="1.300"/></svg>
<div class="abs" style="left:536px;top:36px;width:9px;height:9px;border-radius:50%;background:radial-gradient(circle at 50% 50%,#3a3a40 0,#15151a 45%,#050508 100%)"></div>
<div class="abs" style="left:578px;top:39.500px;width:22px;height:2.500px;border-radius:2px;background:#26262a"></div>
</div>
<div id="tb">
<svg class="abs" style="left:0;top:0" width="33" height="280" viewBox="0 0 33 280">
<path d="M6.500 8.500h4M21.800 6.500l3.800 3.800M25.600 6.500l-3.800 3.800" stroke="#8a8a8a" stroke-width=".9" fill="none"/>
<g transform="translate(16.500 27.400)" fill="none" stroke="#546e7a" stroke-width="1.500" stroke-linecap="round"><path d="M-2.600-3.300a4.600 4.600 0 1 0 5.200 0M0-5.800v5"/></g>
<g transform="translate(16.500 51)" fill="#546e7a"><path d="M-5-2h2.500l3-2.700v9.400l-3-2.700H-5z"/><path d="M2-2.600a3.600 3.600 0 0 1 0 5.200M3.200-4.600a6 6 0 0 1 0 9.200" fill="none" stroke="#546e7a" stroke-width="1.100"/></g>
<g transform="translate(16.500 74.500)" fill="#546e7a"><path d="M-4.200-2h2.500l3-2.700v9.400l-3-2.700h-2.500z"/><path d="M2.800-2.300a3.300 3.300 0 0 1 0 4.600" fill="none" stroke="#546e7a" stroke-width="1.100"/></g>
<g transform="translate(16.500 98)" fill="none" stroke="#546e7a" stroke-width="1.200"><rect x="-3" y="-4.800" width="6" height="9.600" rx="1" transform="rotate(-45)"/><path d="M2.500-6.500a6.500 6.500 0 0 1 4 4" stroke-width="1"/></g>
<g transform="translate(16.500 122)" fill="none" stroke="#546e7a" stroke-width="1.200"><rect x="-3" y="-4.800" width="6" height="9.600" rx="1" transform="rotate(45)"/><path d="M-2.500-6.500a6.500 6.500 0 0 0-4 4" stroke-width="1"/></g>
<g transform="translate(16.500 146) scale(.88)" fill="#546e7a"><path d="M-5.500-3.500h2.500l1-1.500h4l1 1.500h2.500a.8.800 0 0 1 .8.800v6.500a.8.800 0 0 1-.8.800h-11a.8.800 0 0 1-.8-.8v-6.500a.8.800 0 0 1 .8-.8z"/><circle cx="0" cy=".6" r="2.200" fill="#f1f1f1"/></g>
<g transform="translate(16.500 170) scale(.88)" fill="none" stroke="#546e7a" stroke-width="1.400"><circle cx="-1" cy="-1" r="3.500"/><path d="M1.700 1.700l3.500 3.500" stroke-linecap="round"/><path d="M-2.800-1h3.600M-1-2.800v3.600" stroke-width=".9"/></g>
<g transform="translate(16.500 194)" fill="none" stroke="#546e7a" stroke-width="1.100" stroke-linejoin="round"><path d="M3-4.300v8.600l-6.800-4.300z"/></g>
<g transform="translate(16.500 218)" fill="none" stroke="#546e7a" stroke-width="1.100"><circle cx="0" cy="0" r="3.900"/></g>
<g transform="translate(16.500 242)" fill="none" stroke="#546e7a" stroke-width="1.100"><rect x="-3.600" y="-3.600" width="7.200" height="7.200"/></g>
<g transform="translate(16.500 266)" fill="#546e7a"><circle cx="-3.300" cy="0" r=".9"/><circle cx="0" cy="0" r=".9"/><circle cx="3.300" cy="0" r=".9"/></g>
</svg>
</div>
<div class="abs" style="left:696.500px;top:60px;width:3px;height:46px;background:repeating-linear-gradient(#404245 0 2px,#202023 2px 4px)"></div>
<div class="abs" style="left:696.300px;top:133px;width:2.200px;height:30px;background:#c8705c;border-radius:1px"></div>

<svg class="abs" style="left:720px;top:4px" width="12" height="12" viewBox="0 0 12 12"><path d="M1.500 1.500l8 8M9.500 1.500l-8 8" stroke="#bdbdbd" stroke-width=".8" fill="none"/></svg>
<div class="abs wm" style="left:637px;top:3px;font-size:12.100px;line-height:14px;color:#6650f5;letter-spacing:.4px;font-weight:600">跨碼軟體有限公司</div>
<div class="abs wm" style="left:643px;top:11.500px;font-family:'Liberation Serif',serif;font-size:11px;line-height:13px;color:#e22ad0;letter-spacing:0">Cross-Code Co. Ltd.</div>
<div class="abs wm" style="left:3.500px;top:475.500px;font-size:12.100px;line-height:14px;color:#6650f5;letter-spacing:.1px;font-weight:600">跨碼軟體有限公司</div>
<div class="abs wm" style="left:8px;top:485.500px;font-family:'Liberation Serif',serif;font-size:11px;line-height:13px;color:#dd44dd;opacity:.7;letter-spacing:0">Cross-Code Co. Ltd.</div>

</body></html>
